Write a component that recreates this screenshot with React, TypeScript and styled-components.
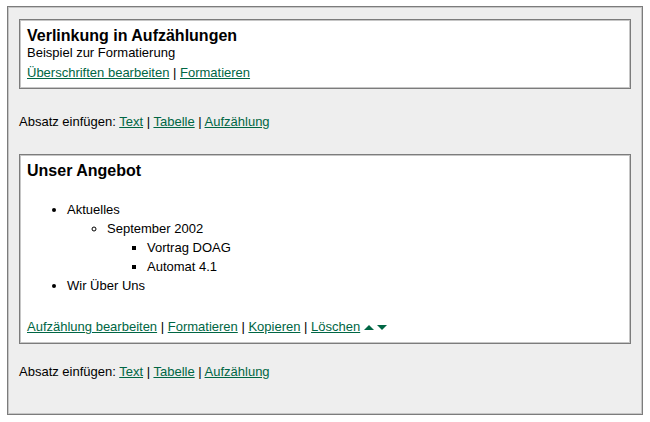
import React from "react";
import styled, { createGlobalStyle } from "styled-components";

const Global = createGlobalStyle`
  html, body { margin: 0; padding: 0; background: #ffffff; }
  body {
    font-family: "Liberation Sans", Arial, Helvetica, sans-serif;
    font-size: 13px;
    color: #000;
  }
`;

const Page = styled.div`
  padding: 6px 7px 0 7px;
`;

const Panel = styled.div`
  box-sizing: border-box;
  width: 636px;
  background: #eeeeee;
  border: 1px solid #7c7c7c;
  box-shadow: inset 0 0 0 1px #c6c6c6;
  padding: 12px 11px 35px 11px;
`;

const Box = styled.div<{ $bottom: number }>`
  background: #ffffff;
  border: 1px solid #7c7c7c;
  box-shadow: inset 0 0 0 1px #c6c6c6;
  padding: 7px 7px ${(p) => p.$bottom + 1}px 7px;
`;

const Title = styled.div`
  font-weight: bold;
  font-size: 16px;
  line-height: 18px;
`;

const Sub = styled.div`
  line-height: 15px;
`;

const Line = styled.div<{ $top: number }>`
  line-height: 15px;
  margin-top: ${(p) => p.$top}px;
  display: flex;
  align-items: center;
  white-space: pre;
`;

const Insert = styled.div<{ $top: number; $bottom: number }>`
  line-height: 15px;
  margin: ${(p) => p.$top}px 0 ${(p) => p.$bottom}px 0;
  white-space: pre;
`;

const Link = styled.a`
  color: #006644;
  text-decoration: underline;
  cursor: pointer;
`;

const List = styled.ul<{ $kind: string; $top?: number }>`
  margin: ${(p) => p.$top ?? 0}px 0 0 0;
  padding-left: 40px;
  list-style-type: ${(p) => p.$kind};
  line-height: 19px;
`;

const Arrows = styled.span`
  display: inline-flex;
  align-items: center;
  gap: 3px;
  margin-left: 4px;
  padding-top: 2px;
`;

const Sep = () => <span> | </span>;

const Up = () => (
  <svg width="10" height="5" viewBox="0 0 10 5">
    <polygon points="5,0 10,5 0,5" fill="#006644" />
  </svg>
);
const Down = () => (
  <svg width="10" height="5" viewBox="0 0 10 5">
    <polygon points="0,0 10,0 5,5" fill="#006644" />
  </svg>
);

const InsertRow = ({ top, bottom }: { top: number; bottom: number }) => (
  <Insert $top={top} $bottom={bottom}>
    Absatz einfügen: <Link>Text</Link>
    <Sep />
    <Link>Tabelle</Link>
    <Sep />
    <Link>Aufzählung</Link>
  </Insert>
);

export default function App() {
  return (
    <>
      <Global />
      <Page>
        <Panel>
          <Box $bottom={7}>
            <Title>Verlinkung in Aufzählungen</Title>
            <Sub>Beispiel zur Formatierung</Sub>
            <Line $top={5}>
              <Link>Überschriften bearbeiten</Link>
              <Sep />
              <Link>Formatieren</Link>
            </Line>
          </Box>
          <InsertRow top={25} bottom={25} />
          <Box $bottom={8}>
            <Title>Unser Angebot</Title>
            <List $kind="disc" $top={20}>
              <li>
                Aktuelles
                <List $kind="circle">
                  <li>
                    September 2002
                    <List $kind="square">
                      <li>Vortrag DOAG</li>
                      <li>Automat 4.1</li>
                    </List>
                  </li>
                </List>
              </li>
              <li>Wir Über Uns</li>
            </List>
            <Line $top={24}>
              <Link>Aufzählung bearbeiten</Link>
              <Sep />
              <Link>Formatieren</Link>
              <Sep />
              <Link>Kopieren</Link>
              <Sep />
              <Link>Löschen</Link>
              <Arrows>
                <Up />
                <Down />
              </Arrows>
            </Line>
          </Box>
          <InsertRow top={20} bottom={0} />
        </Panel>
      </Page>
    </>
  );
}
